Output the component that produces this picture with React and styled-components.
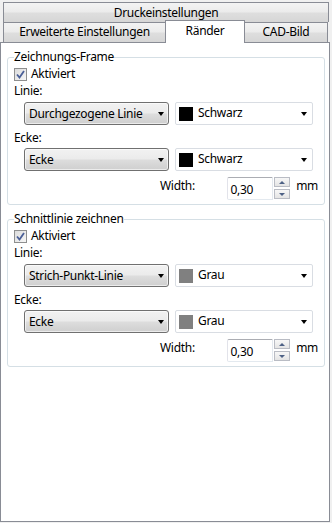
import React from "react";
import styled, { createGlobalStyle } from "styled-components";

const GlobalStyle = createGlobalStyle`
  html, body {
    margin: 0;
    padding: 0;
    background: #f0f0f0;
  }
  body {
    font-family: "Noto Sans", "Open Sans", sans-serif;
    font-size: 12px;
    letter-spacing: -0.3px;
    color: #000;
  }
`;

const Window = styled.div`
  width: 332px;
  height: 523px;
  background: #f0f0f0;
  display: flex;
  flex-direction: column;
  overflow: hidden;
`;

const TabArea = styled.div`
  padding-top: 2px;
`;

const tabGradient = `linear-gradient(#f3f3f3 0%, #ebebeb 48%, #dedede 52%, #d6d6d6 100%)`;

const BackTab = styled.div`
  margin: 0 3px;
  height: 19px;
  border: 1px solid #898c95;
  border-bottom: none;
  background: ${tabGradient};
  display: flex;
  align-items: center;
  justify-content: center;
  line-height: 16px;
`;

const TabRow = styled.div`
  display: flex;
  padding-left: 3px;
  height: 20px;
`;

const Tab = styled.div`
  position: relative;
  box-sizing: border-box;
  width: ${(p) => p.$width}px;
  margin-left: ${(p) => (p.$first ? 0 : -1)}px;
  height: ${(p) => (p.$active ? 23 : 20)}px;
  margin-top: ${(p) => (p.$active ? -2 : 0)}px;
  border: 1px solid #898c95;
  border-bottom: none;
  background: ${(p) => (p.$active ? "#ffffff" : tabGradient)};
  z-index: ${(p) => (p.$active ? 2 : 1)};
  display: flex;
  justify-content: center;
  padding-top: ${(p) => (p.$active ? 2 : 1)}px;
  line-height: 16px;
`;

const Panel = styled.div`
  box-sizing: border-box;
  width: 330px;
  height: 480px;
  border: 1px solid #898c95;
  background: #fff;
  padding: 6px 0 0 6px;
  display: flex;
  flex-direction: column;
  gap: 6px;
`;

const Group = styled.fieldset`
  box-sizing: border-box;
  width: 318px;
  margin: 0;
  padding: 1px 6px 4px 6px;
  border: 1px solid #d5dfe5;
  border-radius: 3px;
  min-inline-size: 0;
`;

const Legend = styled.legend`
  padding: 0;
  line-height: 16px;
`;

const CheckRow = styled.label`
  display: flex;
  align-items: center;
  gap: 4px;
  height: 16px;
  line-height: 16px;
`;

const CheckBox = styled.span`
  box-sizing: border-box;
  width: 13px;
  height: 13px;
  border: 1px solid #8e8f8f;
  background: linear-gradient(135deg, #dcdcdc, #f6f6f6);
  display: flex;
  align-items: center;
  justify-content: center;
`;

const FieldLabel = styled.div`
  line-height: 16px;
  margin-top: ${(p) => p.$top}px;
`;

const ComboRow = styled.div`
  display: flex;
  gap: 6px;
  margin-left: 10px;
  margin-top: ${(p) => p.$top}px;
`;

const Select = styled.div`
  box-sizing: border-box;
  width: 145px;
  height: 23px;
  border: 1px solid #707070;
  border-radius: 3px;
  background: linear-gradient(#f2f2f2 0%, #ebebeb 48%, #dddddd 52%, #cfcfcf 100%);
  box-shadow: inset 0 0 0 1px rgba(255, 255, 255, 0.6);
  display: flex;
  align-items: center;
  justify-content: space-between;
  padding: 0 4px 0 4px;
  line-height: 16px;
`;

const ColorSelect = styled.div`
  box-sizing: border-box;
  width: 138px;
  height: 23px;
  border: 1px solid #d9dde3;
  border-radius: 2px;
  background: #fff;
  display: flex;
  align-items: center;
  padding: 0 5px 2px 3px;
  line-height: 16px;
`;

const Swatch = styled.span`
  width: 14px;
  height: 14px;
  margin-top: 2px;
  background: ${(p) => p.$color};
  margin-right: 5px;
  flex: none;
`;

const ColorName = styled.span`
  flex: 1;
`;

const Arrow = styled.span`
  width: 0;
  height: 0;
  border-left: 3.5px solid transparent;
  border-right: 3.5px solid transparent;
  border-top: 4px solid #000;
  margin-top: ${(p) => p.$shift || 0}px;
`;

const WidthRow = styled.div`
  display: flex;
  align-items: flex-start;
  margin-top: 6px;
  padding-left: 146px;
`;

const WidthLabel = styled.span`
  width: 68px;
  line-height: 16px;
  padding-top: 1px;
`;

const NumInput = styled.div`
  box-sizing: border-box;
  width: 46px;
  height: 23px;
  border: 1px solid #e3e9ef;
  border-top-color: #abadb3;
  border-left-color: #e2e3ea;
  border-radius: 2px 0 0 2px;
  background: #fff;
  padding: 4px 0 0 2px;
  line-height: 16px;
`;

const Spinner = styled.div`
  display: flex;
  flex-direction: column;
  gap: 2px;
  margin-left: 1px;
`;

const SpinButton = styled.div`
  box-sizing: border-box;
  width: 16px;
  height: 10px;
  border: 1px solid #b9bcc4;
  background: linear-gradient(#f7f7f7, #e4e4e4);
  display: flex;
  align-items: center;
  justify-content: center;
`;

const SpinArrow = styled.span`
  width: 0;
  height: 0;
  border-left: 3px solid transparent;
  border-right: 3px solid transparent;
  ${(p) =>
    p.$up ? "border-bottom: 3px solid #4d6185;" : "border-top: 3px solid #4d6185;"}
`;

const Unit = styled.span`
  margin-left: 6px;
  line-height: 16px;
  padding-top: 1px;
`;

const CheckMark = () => (
  <svg width="9" height="9" viewBox="0 0 9 9">
    <path d="M1 4.5 L3.5 7.5 L8 1" fill="none" stroke="#4a5f97" strokeWidth="1.8" />
  </svg>
);

const LineGroup = ({ title, lineStyle, color, colorName }) => (
  <Group>
    <Legend>{title}</Legend>
    <CheckRow>
      <CheckBox>
        <CheckMark />
      </CheckBox>
      Aktiviert
    </CheckRow>
    <FieldLabel $top={1}>Linie:</FieldLabel>
    <ComboRow $top={3}>
      <Select>
        {lineStyle}
        <Arrow $shift={1} />
      </Select>
      <ColorSelect>
        <Swatch $color={color} />
        <ColorName>{colorName}</ColorName>
        <Arrow $shift={3} />
      </ColorSelect>
    </ComboRow>
    <FieldLabel $top={5}>Ecke:</FieldLabel>
    <ComboRow $top={2}>
      <Select>
        Ecke
        <Arrow $shift={1} />
      </Select>
      <ColorSelect>
        <Swatch $color={color} />
        <ColorName>{colorName}</ColorName>
        <Arrow $shift={3} />
      </ColorSelect>
    </ComboRow>
    <WidthRow>
      <WidthLabel>Width:</WidthLabel>
      <NumInput>0,30</NumInput>
      <Spinner>
        <SpinButton>
          <SpinArrow $up />
        </SpinButton>
        <SpinButton>
          <SpinArrow />
        </SpinButton>
      </Spinner>
      <Unit>mm</Unit>
    </WidthRow>
  </Group>
);

export default function App() {
  return (
    <Window>
      <GlobalStyle />
      <TabArea>
        <BackTab>Druckeinstellungen</BackTab>
        <TabRow>
          <Tab $first $width={163}>Erweiterte Einstellungen</Tab>
          <Tab $active $width={80}>Ränder</Tab>
          <Tab $width={84}>CAD-Bild</Tab>
        </TabRow>
      </TabArea>
      <Panel>
        <LineGroup
          title="Zeichnungs-Frame"
          lineStyle="Durchgezogene Linie"
          color="#000000"
          colorName="Schwarz"
        />
        <LineGroup
          title="Schnittlinie zeichnen"
          lineStyle="Strich-Punkt-Linie"
          color="#808080"
          colorName="Grau"
        />
      </Panel>
    </Window>
  );
}
